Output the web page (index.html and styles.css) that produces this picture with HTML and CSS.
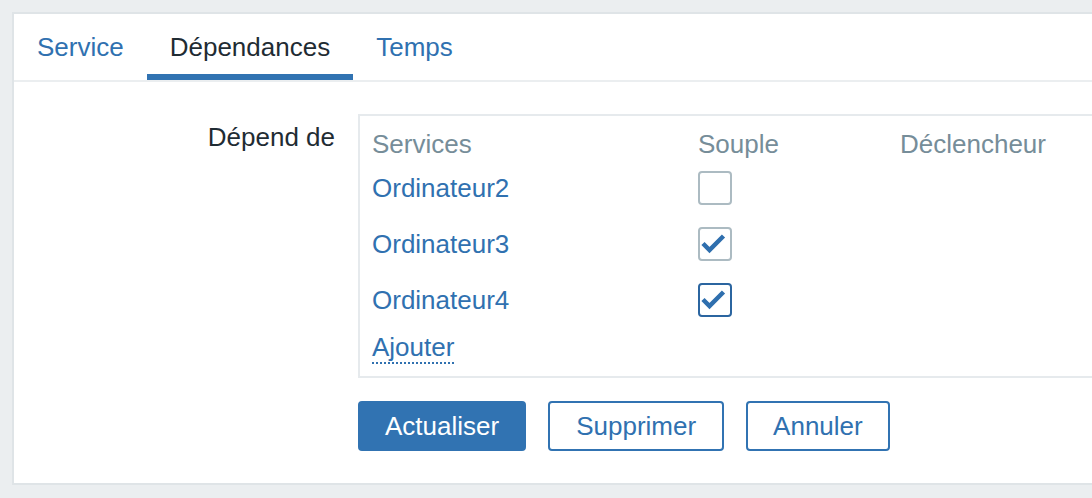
FILE: index.html
```html
<!DOCTYPE html>
<html lang="fr">
<head>
<meta charset="utf-8">
<title>Dépendances</title>
<link rel="stylesheet" href="styles.css">
</head>
<body>
<div class="panel">
  <nav class="tabs">
    <a class="tab">Service</a>
    <a class="tab active">Dépendances</a>
    <a class="tab">Temps</a>
  </nav>
  <div class="form">
    <div class="label">Dépend de</div>
    <div class="box">
      <div class="grid">
        <div class="th">Services</div>
        <div class="th">Souple</div>
        <div class="th">Déclencheur</div>

        <div class="td"><a class="link">Ordinateur2</a></div>
        <div class="td"><span class="cb"></span></div>
        <div class="td"></div>

        <div class="td"><a class="link">Ordinateur3</a></div>
        <div class="td"><span class="cb checked"><svg viewBox="0 0 30 30" width="30" height="30"><polyline points="3,14.5 9.5,21 23.5,7"/></svg></span></div>
        <div class="td"></div>

        <div class="td"><a class="link">Ordinateur4</a></div>
        <div class="td"><span class="cb checked focus"><svg viewBox="0 0 30 30" width="30" height="30"><polyline points="3,14.5 9.5,21 23.5,7"/></svg></span></div>
        <div class="td"></div>
      </div>
      <div class="add"><a class="dotted">Ajouter</a></div>
    </div>
    <div class="buttons">
      <button class="btn primary">Actualiser</button>
      <button class="btn wide">Supprimer</button>
      <button class="btn">Annuler</button>
    </div>
  </div>
</div>
</body>
</html>
```

FILE: styles.css
```css
html, body {
  margin: 0;
  padding: 0;
  background: #ebeef0;
  overflow: hidden;
  font-family: "Liberation Sans", Arial, sans-serif;
  font-size: 26px;
  color: #1f2c33;
}

.panel {
  margin: 12px -30px 0 12px;
  background: #fff;
  border: 2px solid #dfe4e7;
  padding-bottom: 32px;
}

.tabs {
  display: flex;
  border-bottom: 2px solid #ebeef0;
}

.tab {
  padding: 18px 23px 12px;
  line-height: 30px;
  border-bottom: 6px solid transparent;
  color: #3071b0;
}

.tab.active {
  color: #1f2c33;
  border-bottom-color: #3173b2;
}

.form {
  display: grid;
  grid-template-columns: 321px 1fr;
  column-gap: 23px;
  row-gap: 23px;
  padding-top: 32px;
}

.label {
  text-align: right;
  line-height: 30px;
  margin-top: 8px;
}

.box {
  border: 2px solid #e6eaed;
  padding: 11px 12px 14px;
}

.grid {
  display: grid;
  grid-template-columns: 326px 202px 1fr;
  grid-auto-rows: 56px;
  grid-template-rows: 33px;
}

.th {
  color: #768d99;
  line-height: 30px;
  display: flex;
  align-items: center;
}

.td {
  display: flex;
  align-items: center;
  line-height: 30px;
}

.link {
  color: #3071b0;
}

.cb {
  width: 34px;
  height: 34px;
  box-sizing: border-box;
  border: 2px solid #acbbc2;
  border-radius: 4px;
  display: flex;
  align-items: center;
  justify-content: center;
}

.cb.focus {
  border-color: #2b65a0;
}

.cb svg polyline {
  fill: none;
  stroke: #2f6fae;
  stroke-width: 4.5;
  stroke-linejoin: miter;
}

.add {
  padding-top: 4px;
  line-height: 30px;
}

.dotted {
  color: #3071b0;
  border-bottom: 2px dotted #3071b0;
}

.buttons {
  grid-column: 2;
  display: flex;
  gap: 22px;
}

.btn {
  height: 50px;
  box-sizing: border-box;
  padding: 0 25px;
  border: 2px solid #3173b2;
  border-radius: 4px;
  background: #fff;
  color: #3071b0;
  font-family: "Liberation Sans", Arial, sans-serif;
  font-size: 26px;
}

.btn.wide {
  padding: 0 26px;
}

.btn.primary {
  background: #3173b2;
  color: #fff;
}
```
